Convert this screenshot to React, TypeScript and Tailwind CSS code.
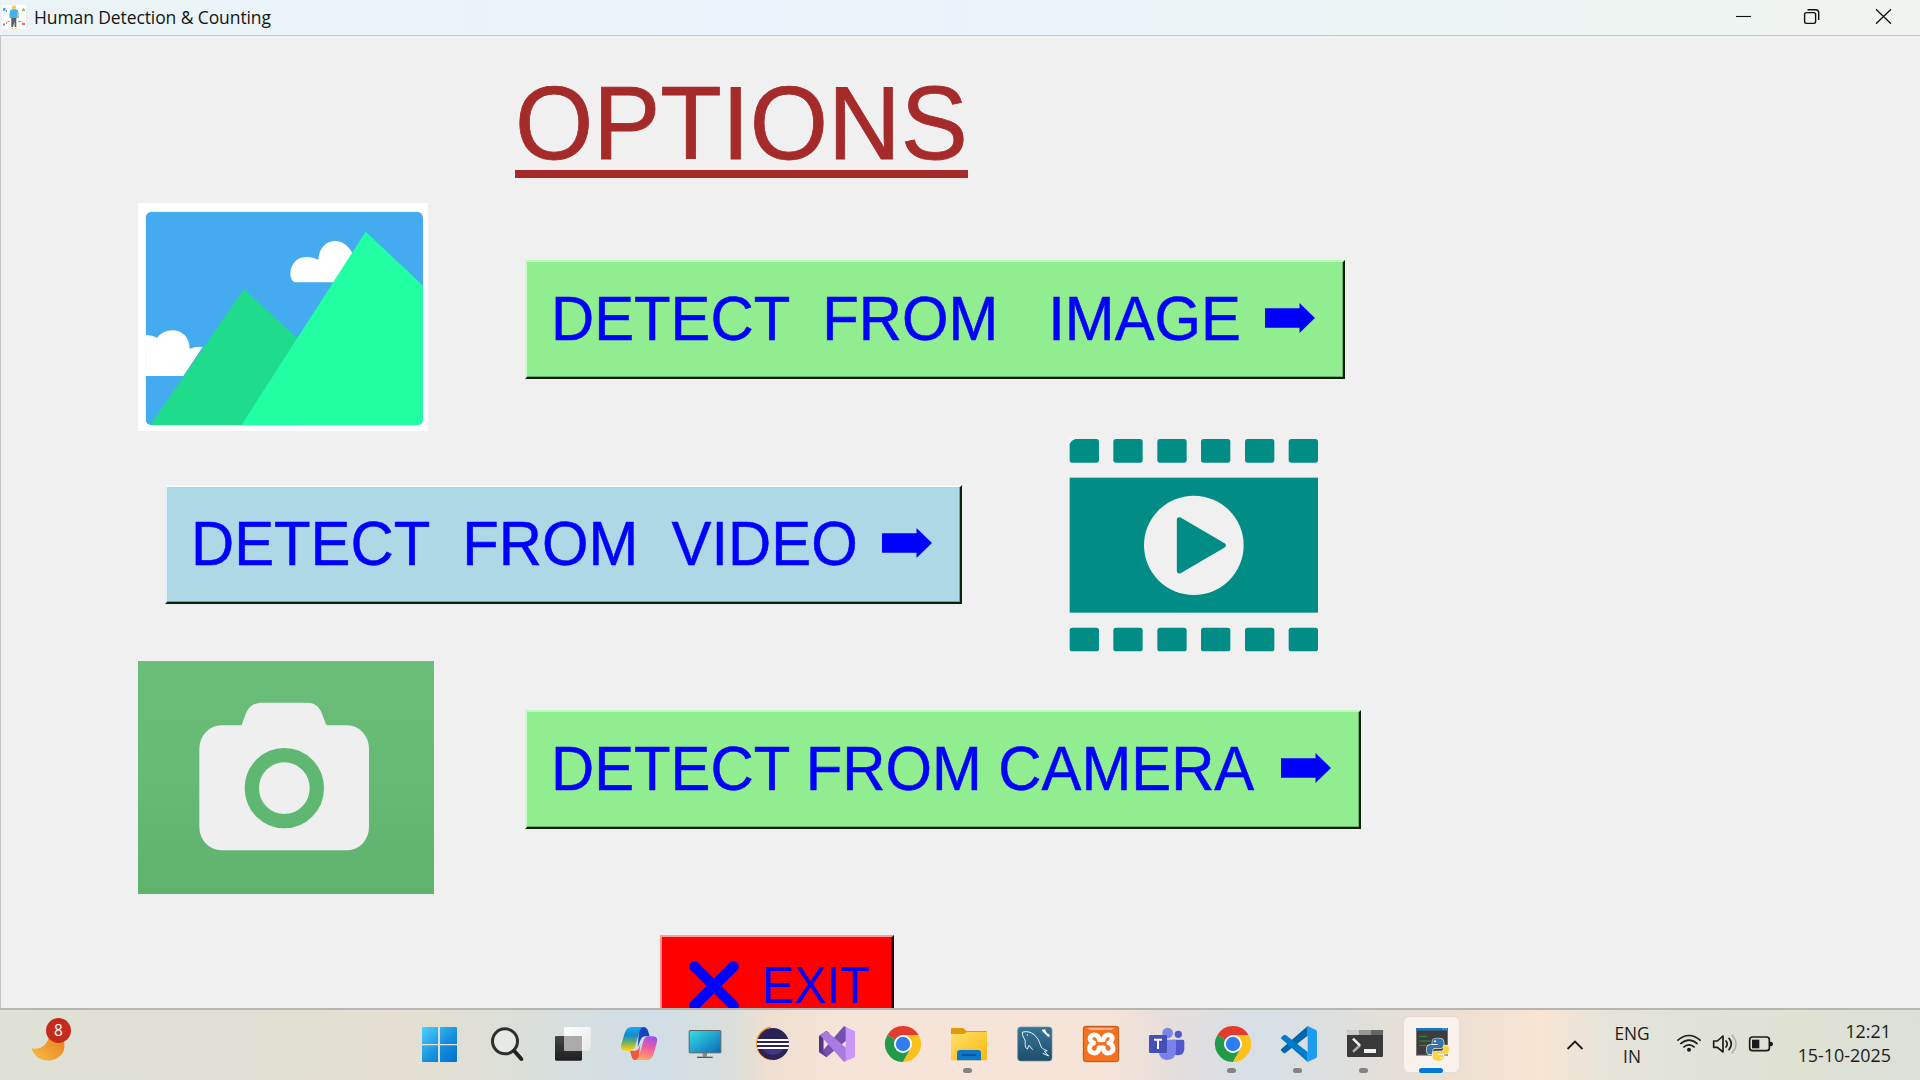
import React from "react";

const sans = "font-['Open_Sans','Noto_Sans',sans-serif]";
const arial = "font-['Liberation_Sans',Arial,sans-serif]";

function PersonIcon() {
  return (
    <svg className="w-6 h-6 shrink-0" viewBox="0 0 24 24">
      <rect width="24" height="24" fill="#fff" />
      <circle cx="12" cy="2.3" r="2.1" fill="#f8c25c" />
      <path d="M8 5.5 10 4.2h4L16 5.5 17 13H7Z" fill="#3bb2f3" />
      <path d="M7.5 8v5M16 8v5" stroke="#f8c25c" strokeWidth="1.3" />
      <path d="M9.3 13h5v9H12.6V16.5L11 22H9.3Z" fill="#5b5d62" />
      <path d="M9.5 23.3h1.6M13 23.3h1.6" stroke="#f8c25c" strokeWidth="1.3" />
      <path d="M1 3h2.5v3H1Z" fill="#27b4f5" />
      <path d="M20 4.5 21.5 3 23 4.5V6H20Z" fill="#84c04f" />
      <path d="M1 18.5h2v2H1Z" fill="#9a76bd" />
      <path d="M20 18h3v2h-3Z" fill="#ee6a56" />
      <path d="M4.5 5v2M4.5 17v2M5.5 16.5h2M16 16.5h3" stroke="#777" strokeWidth=".8" />
    </svg>
  );
}

function TitleBar() {
  return (
    <header className="flex h-9 shrink-0 items-start justify-between border-b border-[#c3c5c6] bg-linear-to-r from-[#ebf3f6] via-[#e9f4fa] to-[#f0f4ef]">
      <div className="flex pl-[2px] pt-[5px]">
        <PersonIcon />
        <span className={`${sans} ml-2 whitespace-nowrap text-[17.5px] leading-[25px] tracking-[-0.1px] text-[#151515]`}>
          Human Detection &amp; Counting
        </span>
      </div>
      <div className="flex">
        <svg className="h-[35px] w-[69px]" viewBox="0 0 69 35" fill="none" stroke="#111" strokeWidth="1.1">
          <path d="M26 16.5H41" />
        </svg>
        <svg className="h-[35px] w-[69px]" viewBox="0 0 69 35" fill="none" stroke="#111" strokeWidth="1.4">
          <rect x="25.6" y="12.6" width="11" height="10.8" rx="1.8" />
          <path d="M28.5 9.7h8.2a3 3 0 0 1 3 3V20" />
        </svg>
        <svg className="h-[35px] w-[72px]" viewBox="0 0 72 35" fill="none" stroke="#111" strokeWidth="1.3">
          <path d="M28 9.3 43 23.7M43 9.3 28 23.7" />
        </svg>
      </div>
    </header>
  );
}

function Landscape() {
  return (
    <svg className="h-[228px] w-[290px] shrink-0" viewBox="54 39 870 684">
      <defs>
        <clipPath id="frame">
          <rect x="77" y="65" width="832" height="641" rx="18" />
        </clipPath>
      </defs>
      <rect x="54" y="39" width="870" height="684" fill="#fff" />
      <g clipPath="url(#frame)">
        <rect x="77" y="65" width="832" height="641" fill="#44abf1" />
        <path d="M528 277C500 277 505 201 558 201Q580 201 595 210C598 140 673 135 697 190L660 277Z" fill="#fff" />
        <path d="M60 558V434Q95 434 111 444C135 408 208 410 209 476Q228 469 248 471L190 558Z" fill="#fff" />
        <path d="M372 297 550 461V706H90Z" fill="#1fdb8c" />
        <path d="M737 125 909 287V706H364Z" fill="#22ffa3" />
      </g>
    </svg>
  );
}

const holes = [89, 220, 352, 483, 615, 746];

function Film() {
  return (
    <svg className="h-[250px] w-[300px] shrink-0" viewBox="0 0 900 750" fill="#028c86">
      {holes.map((x) => (
        <React.Fragment key={x}>
          <rect x={x} y="57" width="88" height="71" rx="8" />
          <rect x={x} y="623" width="88" height="71" rx="8" />
        </React.Fragment>
      ))}
      <path d="M80 50h26v7q-12 4-17 14l-9 5Z" fill="#f4f4f4" />
      <rect x="89" y="173" width="745" height="405" />
      <ellipse cx="461.500" cy="376" rx="149.500" ry="149" fill="#f0f0f0" />
      <path d="M418 299 550 376 418 453Z" stroke="#028c86" strokeWidth="15" strokeLinejoin="round" />
    </svg>
  );
}

function CameraPicture() {
  return (
    <svg className="h-[233px] w-[296px] shrink-0" viewBox="54 62 888 699">
      <defs>
        <linearGradient id="cam" x1="0" y1="0" x2="0" y2="1">
          <stop offset="0" stopColor="#6abe79" />
          <stop offset=".5" stopColor="#66ba75" />
          <stop offset="1" stopColor="#60b26f" />
        </linearGradient>
      </defs>
      <rect x="54" y="62" width="888" height="699" fill="url(#cam)" />
      <path d="M304 255H365C380 215 382 187 430 187H560C603 187 604 220 620 255H682A65 70 0 0 1 747 325V560A66 70 0 0 1 682 630H304A66 70 0 0 1 238 560V325A66 70 0 0 1 304 255Z" fill="#efefef" />
      <ellipse cx="493" cy="443.500" rx="97.500" ry="99" fill="#efefef" stroke="#5fb871" strokeWidth="43" />
    </svg>
  );
}

function Arrow() {
  return (
    <svg className="-mt-[3px] h-[30px] w-[50px] shrink-0" viewBox="0 0 50 30" fill="#00f">
      <path d="M0 5.200H34.500V0L50 15 34.500 30V24.700H0Z" />
    </svg>
  );
}

function DetectButton({ label, className, textClass }: { label: string; className: string; textClass: string }) {
  return (
    <button
      className={`${arial} flex h-[119px] shrink-0 items-center border-2 border-b-[#10200f] border-r-[#10200f] pl-6 text-left text-[#00f] ${className}`}
    >
      <span
        className={`-mt-[2px] block shrink-0 origin-center scale-y-[1.05] whitespace-pre text-[59.8px] leading-[68px] [-webkit-text-stroke:0.5px_#00f] ${textClass}`}
      >
        {label}
      </span>
      <Arrow />
    </button>
  );
}

/* Taskbar icons share a 120-unit box drawn at 40px. */
function Glyph({ x, children }: { x: number; children: React.ReactNode }) {
  return (
    <svg className="h-10 w-10 shrink-0 overflow-visible" viewBox={`${x} 57 120 120`}>
      {children}
    </svg>
  );
}

function WindowsLogo() {
  return (
    <Glyph x={57}>
      <defs>
        <linearGradient id="win" gradientUnits="userSpaceOnUse" x1="66" y1="66" x2="171" y2="171">
          <stop offset="0" stopColor="#4fd0ff" />
          <stop offset=".55" stopColor="#1690dd" />
          <stop offset="1" stopColor="#0070cf" />
        </linearGradient>
      </defs>
      <path d="M66 69q0-3 3-3h45v51H66ZM120 66h48q3 0 3 3v48h-51ZM66 121h48v50H69q-3 0-3-3ZM120 121h51v47q0 3-3 3h-48Z" fill="url(#win)" />
    </Glyph>
  );
}

function SearchIcon() {
  return (
    <Glyph x={255}>
      <circle cx="315" cy="109" r="37.500" fill="#eef1ee" fillOpacity=".55" stroke="#2e2e2e" strokeWidth="9" />
      <path d="M343 138 364 162" stroke="#222" strokeWidth="12" strokeLinecap="round" />
    </Glyph>
  );
}

function TaskView() {
  return (
    <Glyph x={453}>
      <defs>
        <linearGradient id="tv" x1="0" y1="0" x2="0" y2="1">
          <stop offset="0" stopColor="#464646" />
          <stop offset="1" stopColor="#1e1e1e" />
        </linearGradient>
        <linearGradient id="tv2" x1="0" y1="0" x2="1" y2="1">
          <stop offset="0" stopColor="#fff" />
          <stop offset="1" stopColor="#e9e9e9" />
        </linearGradient>
      </defs>
      <rect x="492" y="66" width="80" height="72" rx="4" fill="url(#tv2)" />
      <rect x="465" y="93" width="81" height="74" rx="4" fill="url(#tv)" />
      <path d="M492 93h54v45h-51q-3 0-3-3Z" fill="#ababab" />
    </Glyph>
  );
}

function Copilot() {
  return (
    <Glyph x={651}>
      <defs>
        <linearGradient id="cpA" x1="0" y1="0" x2="0" y2="1">
          <stop offset="0" stopColor="#19a8f0" />
          <stop offset=".35" stopColor="#128bd2" />
          <stop offset=".62" stopColor="#5fae70" />
          <stop offset=".95" stopColor="#f7cf0b" />
        </linearGradient>
        <linearGradient id="cpB" x1=".5" y1="0" x2=".3" y2="1">
          <stop offset="0" stopColor="#a34fe8" />
          <stop offset=".5" stopColor="#f5609a" />
          <stop offset="1" stopColor="#ffac5e" />
        </linearGradient>
      </defs>
      <path d="M718 66h11q12 0 16 14l4 14h-12q-12 0-16 12l-8 20Z" fill="#1743bd" />
      <path d="M715 165h-9q-8 0-11-10l-5-18h14q10 0 14-12l3-8Z" fill="#f2593c" />
      <path d="M694 66h37q-9 1-13 16l-12 41q-4 14-17 14h-12q-18 0-13-19l10-34q6-18 20-18Z" fill="url(#cpA)" />
      <path d="M741 165h-36q9-2 13-16l12-41q4-14 17-14h12q17 0 11 20l-9 32q-6 19-20 19Z" fill="url(#cpB)" />
    </Glyph>
  );
}

function Monitor() {
  return (
    <Glyph x={849}>
      <defs>
        <linearGradient id="mon" x1="0" y1="0" x2="1" y2="1">
          <stop offset="0" stopColor="#36dfe0" />
          <stop offset="1" stopColor="#0a68bd" />
        </linearGradient>
      </defs>
      <path d="M908 143h13v12h-13Z" fill="#85898c" />
      <rect x="867.500" y="76.500" width="95" height="67" rx="2" fill="url(#mon)" stroke="#5d6468" strokeWidth="3" />
      <path d="M891 157h47" stroke="#54585b" strokeWidth="4" />
    </Glyph>
  );
}

function Eclipse() {
  return (
    <Glyph x={1047}>
      <path d="M1112 66a50 50 0 0 0 0 99C1060 145 1060 85 1112 66Z" fill="#f7941e" stroke="#f7941e" strokeWidth="3" />
      <circle cx="1119" cy="117" r="48" fill="#2c2255" />
      <path d="M1088 133h62a37 37 0 0 1-62 0Z" fill="#423383" />
      <path d="M1072 105h94M1071 117h96M1072 129h94" stroke="#fff" strokeWidth="5.500" />
    </Glyph>
  );
}

function VisualStudio() {
  return (
    <Glyph x={45}>
      <path d="M57 93 79 78 88 85 70 101V132L88 148 79 157 57 142Z" fill="#62409a" />
      <path d="M57 93 79 78 88 85 70 101V132L57 142Z" fill="#53338a" />
      <path d="M80 156 138 107V66L132 63 70 135Z" fill="#7350b0" />
      <path d="M60 91 79 78 138 128V168L132 171Z" fill="#a97ae0" />
      <path d="M132 63 165 79V156L132 171 137 165V68Z" fill="#c996fb" />
    </Glyph>
  );
}

function Chrome() {
  return (
    <Glyph x={243}>
      <path d="M309 117 262.200 90A54 54 0 0 1 355.800 90H309Z" fill="#e33b2e" />
      <path d="M309 117 262.200 90A54 54 0 0 0 309 171L332.400 130.500Z" fill="#229a48" />
      <path d="M309 90H355.800A54 54 0 0 1 309 171L332.400 130.500Z" fill="#fcc21b" />
      <circle cx="309" cy="117" r="27" fill="#fff" />
      <circle cx="309" cy="117" r="21.500" fill="#2f7df0" />
    </Glyph>
  );
}

function Explorer() {
  return (
    <Glyph x={441}>
      <defs>
        <linearGradient id="fold" x1="0" y1="0" x2="1" y2="1">
          <stop offset="0" stopColor="#ffdf6e" />
          <stop offset="1" stopColor="#fbb90c" />
        </linearGradient>
      </defs>
      <path d="M453 72q0-3 3-3h31q4 0 7 4l5 5h58q4 0 4 4v20H453Z" fill="#dd9c05" />
      <path d="M453 87h35q5 0 9-3l4-3h60v81q0 4-4 4H457q-4 0-4-4Z" fill="url(#fold)" />
      <path d="M471 166v-22q0-9 9-9h54q9 0 9 9v22Z" fill="#0a76cc" />
      <path d="M487 150h40" stroke="#124c84" strokeWidth="5" strokeLinecap="round" />
    </Glyph>
  );
}

function MySql() {
  return (
    <Glyph x={639}>
      <defs>
        <linearGradient id="sql" x1="0" y1="0" x2="0" y2="1">
          <stop offset="0" stopColor="#37759b" />
          <stop offset="1" stopColor="#1e4d69" />
        </linearGradient>
      </defs>
      <rect x="653" y="66" width="103" height="102" rx="9" fill="url(#sql)" stroke="#7796a8" strokeWidth="2" />
      <path d="M668 81C665 92 673 99 676 108 674 124 679 133 682 132L687 121 698 134M668 81C695 75 714 95 721 119 723 130 730 133 742 137L733 139 746 153 728 145" fill="none" stroke="#e9f3f7" strokeWidth="3" strokeLinejoin="round" />
      <circle cx="682" cy="90" r="2" fill="#fff" />
      <path d="m731 78 14 14" stroke="#fff" strokeWidth="6" />
      <path d="M725 74l5 8 7-2-1-7M750 94l-3-8-7 5 5 5" fill="#fff" />
    </Glyph>
  );
}

function Xampp() {
  return (
    <Glyph x={837}>
      <rect x="850" y="64" width="106" height="106" rx="7" fill="#f4711f" stroke="#b9531b" strokeWidth="3" />
      <path d="M864 68h78q-1 7-8 7h-62q-7 0-8-7Z" fill="#f9b08a" />
      <path d="M898 105C896 88 878 86 872 95 867 104 873 111 882 114 866 117 864 137 877 143 890 148 898 138 897 127H910C909 139 918 148 931 143 944 137 941 118 926 114 936 109 940 98 933 92 923 86 912 91 910 105Z" fill="none" stroke="#fff" strokeWidth="14" strokeLinejoin="round" />
      <path d="M887 117h31" stroke="#f4711f" strokeWidth="9" />
    </Glyph>
  );
}

function Teams() {
  return (
    <Glyph x={45}>
      <circle cx="145" cy="88" r="11" fill="#5059c9" />
      <path d="M127 104h31q5 0 5 6v20q0 21-19 21-17 0-17-20Z" fill="#5059c9" />
      <circle cx="113" cy="84" r="16" fill="#7b83eb" />
      <path d="M88 104h45q5 0 5 5v27q0 29-27 29-20 0-24-20Z" fill="#7b83eb" />
      <rect x="57" y="90" width="54" height="54" rx="4" fill="#464eb8" />
      <path d="M72 104h24M84 104v28" stroke="#fff" strokeWidth="6" />
    </Glyph>
  );
}

function VsCode() {
  return (
    <Glyph x={441}>
      <path d="M453 133 533 63V92L467 143q-4 3-7 0l-6-6q-3-2-1-4Z" fill="#0065a9" />
      <path d="M454 97l7-6q3-3 7 0L533 141V171L454 101q-2-2 0-4Z" fill="#007acc" />
      <path d="M533 63 558 75q3 2 3 5V155q0 3-3 4L533 171Z" fill="#1f9cf0" />
    </Glyph>
  );
}

function Terminal() {
  return (
    <Glyph x={639}>
      <rect x="651" y="75" width="108" height="81" rx="4" fill="#393939" />
      <path d="M651 90V79q0-4 4-4h32v15Z" fill="#cbcbcb" />
      <path d="M687 75h36v15h-36Z" fill="#969696" />
      <path d="M723 75h32q4 0 4 4v11h-36Z" fill="#656565" />
      <path d="M669 140 690 121" stroke="#a9a9a9" strokeWidth="8" />
      <path d="M669 101 690 122" stroke="#efefef" strokeWidth="8" />
      <rect x="702" y="132" width="36" height="12" rx="1" fill="#f1f1f1" />
    </Glyph>
  );
}

function PythonConsole() {
  return (
    <Glyph x={843}>
      <rect x="855" y="69" width="96" height="83" fill="#6f7173" />
      <rect x="858" y="76" width="90" height="73" fill="#3d3d3d" />
      <rect x="855" y="69" width="96" height="7" fill="#0b78d0" />
      <path d="M935 72h4M943 72h4" stroke="#fff" strokeWidth="2" />
      <path d="M865 94h23M865 108h35M865 121h22" stroke="#2f9638" strokeWidth="3" />
      <g strokeLinejoin="round" strokeWidth="4" paintOrder="stroke" stroke="#eef0ee">
        <path d="M920 100c-14 0-16 5-16 10v7h17v3h-23c-8 0-11 5-11 14s3 14 11 14h6v-9c0-7 4-10 10-10h15c6 0 9-4 9-9v-9c0-7-6-11-18-11Z" fill="#3672a4" />
        <path d="M922 167c13 0 16-5 16-10v-7h-17v-3h22c8 0 11-5 11-13 0-9-3-13-10-13h-5v8c0 7-4 10-10 10h-15c-6 0-9 4-9 9v8c0 7 5 11 17 11Z" fill="#ffd43b" />
      </g>
      <circle cx="912" cy="109" r="3" fill="#fff" />
      <circle cx="930" cy="158" r="3" fill="#fff" />
    </Glyph>
  );
}

const apps = [
  { icon: <WindowsLogo />, open: false },
  { icon: <SearchIcon />, open: false },
  { icon: <TaskView />, open: false },
  { icon: <Copilot />, open: false },
  { icon: <Monitor />, open: false },
  { icon: <Eclipse />, open: false },
  { icon: <VisualStudio />, open: false },
  { icon: <Chrome />, open: false },
  { icon: <Explorer />, open: true },
  { icon: <MySql />, open: false },
  { icon: <Xampp />, open: false },
  { icon: <Teams />, open: false },
  { icon: <Chrome />, open: true },
  { icon: <VsCode />, open: true },
  { icon: <Terminal />, open: true },
];

function Weather() {
  return (
    <div className="relative ml-[31px] mt-[14px] h-10 w-10 shrink-0">
      <svg className="h-10 w-10" viewBox="0 0 40 40">
        <defs>
          <linearGradient id="moon" x1="0" y1="1" x2="1" y2="0">
            <stop offset="0" stopColor="#f9bd45" />
            <stop offset="1" stopColor="#e67a1c" />
          </linearGradient>
        </defs>
        <path d="M.5 24C8 27 17 22 19 9 32 9 37 21 31 30 23 40 5 39 .5 24Z" fill="url(#moon)" />
      </svg>
      <span className={`${sans} absolute left-[15px] top-[-6px] flex h-[25px] w-[25px] items-center justify-center rounded-full bg-[#c42b1c] text-[15.5px] text-white`}>
        8
      </span>
    </div>
  );
}

function Taskbar() {
  return (
    <footer className="flex h-[72px] shrink-0 items-start border-t-2 border-[#b5b5b1] bg-[linear-gradient(90deg,#dfe1d4_0px,#dfdfd3_250px,#e5dfd1_400px,#dcdfd8_510px,#d0dee7_650px,#dadedc_730px,#efdfd0_770px,#f5e4d7_840px,#f5e4d8_1110px,#e6dedb_1165px,#d7dfe6_1250px,#dcdfdf_1330px,#ecdfd2_1450px,#f8e5d2_1540px,#e7e4d8_1600px,#e1e3da_1680px,#dfe1d2_1800px,#dbdfd9_1920px)]">
      <Weather />
      <nav className="ml-[335px] flex">
        {apps.map((app, i) => (
          <div key={i} className="relative flex h-[70px] w-[66px] shrink-0 justify-center pt-[14px]">
            {app.icon}
            {app.open && <span className="absolute bottom-[7px] left-[29px] h-[5px] w-[9px] rounded-full bg-[#858381]" />}
          </div>
        ))}
        <div className="relative ml-[7px] mt-[6px] flex h-[57px] w-[57px] shrink-0 justify-center rounded-md border border-[#e5ddd5] bg-[#f9f2ec] pt-[7px]">
          <PythonConsole />
          <span className="absolute bottom-[-1px] left-[15px] h-[5px] w-6 rounded-full bg-[#0078d4]" />
        </div>
      </nav>
      <div className={`${sans} ml-auto flex text-[#1c1c1c]`}>
        <svg className="mr-[29px] mt-[27px] h-4 w-[18px]" viewBox="0 0 18 16" fill="none" stroke="#1b1b1b" strokeWidth="1.800">
          <path d="M1.500 12 9 4.500 16.500 12" />
        </svg>
        <div className="mt-[12px] w-[38px] text-center text-[17.3px] leading-[23px]">
          <div>ENG</div>
          <div>IN</div>
        </div>
        <svg className="ml-[25px] mt-[18px] h-8 w-[100px]" viewBox="408 69 300 96" fill="none" stroke="#1b1b1b" strokeWidth="5">
          <path d="M412 107Q447 76 482 107M421 117Q447 94 473 117M430 127Q447 112 464 127" />
          <circle cx="447" cy="134" r="6" fill="#1b1b1b" stroke="none" />
          <path d="M521 108h11L549 93V141L532 127H521Z" strokeLinejoin="round" />
          <path d="M558 108Q565 117 558 126M567 100Q581 117 567 134" strokeLinecap="round" />
          <path d="M576 90Q600 117 576 144" stroke="#b4b5aa" strokeLinecap="round" />
          <rect x="629" y="96" width="59" height="41" rx="8" />
          <rect x="636" y="104" width="22" height="26" fill="#1b1b1b" stroke="none" />
          <path d="M690 110q9 0 9 7t-9 7Z" fill="#1b1b1b" stroke="none" />
        </svg>
        <div className="ml-[19px] mr-[29px] mt-[9px] w-[96px] whitespace-nowrap text-right text-[17.9px] leading-[24px]">
          <div>12:21</div>
          <div>15-10-2025</div>
        </div>
      </div>
    </footer>
  );
}

export default function App() {
  return (
    <div className="flex h-[1080px] w-[1920px] flex-col overflow-hidden bg-[#f0f0f0]">
      <TitleBar />
      <main className="flex min-h-0 flex-1 flex-col overflow-hidden border-l border-[#c3c5c6]">
        <div className="ml-[514px] h-[142px] w-[453px] shrink-0 border-b-8 border-[#a52a2a] pt-[30px]">
          <h1 className={`${arial} origin-center scale-y-[1.03] whitespace-nowrap text-[100.600px] leading-[114px] text-[#a52a2a] [-webkit-text-stroke:0.8px_#a52a2a]`}>
            OPTIONS
          </h1>
        </div>
        <section className="ml-[137px] mt-[25px] flex h-[228px] shrink-0">
          <Landscape />
          <DetectButton
            label="DETECT  FROM   IMAGE"
            className="ml-[97px] mt-[57px] w-[820px] border-l-[#c9fbc9] border-t-[#b9fbb9] bg-[#90ee90] shadow-[inset_-1px_-1px_0_#6cae6c]"
            textClass="w-[714px]"
          />
        </section>
        <section className="ml-[164px] flex h-[229px] shrink-0">
          <DetectButton
            label="DETECT  FROM  VIDEO"
            className="mt-[54px] w-[797px] border-l-[#dcf2fa] border-t-[#f3fcff] bg-[#add8e6] shadow-[inset_-1px_-1px_0_#7d9da8]"
            textClass="w-[691px]"
          />
          <div className="-mt-[11px] ml-[78px]">
            <Film />
          </div>
        </section>
        <section className="ml-[137px] mt-[1px] flex h-[233px] shrink-0">
          <CameraPicture />
          <DetectButton
            label="DETECT FROM CAMERA"
            className="ml-[91px] mt-[49px] w-[836px] border-l-[#c9fbc9] border-t-[#b9fbb9] bg-[#90ee90] shadow-[inset_-1px_-1px_0_#6cae6c]"
            textClass="w-[730px]"
          />
        </section>
        <button
          className={`${arial} ml-[659px] mt-[41px] flex h-[100px] w-[234px] shrink-0 items-start border-2 border-b-[#200] border-l-[#ff8f8f] border-r-[#200] border-t-[#ff9a9a] bg-[#f00] text-[#00f] shadow-[inset_-1px_-1px_0_#b00000]`}
        >
          <svg className="ml-[27px] mt-6 h-[50px] w-[50px] shrink-0" viewBox="0 0 50 50" stroke="#00f" strokeWidth="10.500" strokeLinecap="round">
            <path d="M5.500 5.500 44.500 44.500M44.500 5.500 5.500 44.500" />
          </svg>
          <span className="ml-[23px] mt-7 block origin-center scale-y-[1.07] text-[48.5px] leading-[40px]">EXIT</span>
        </button>
      </main>
      <Taskbar />
    </div>
  );
}
